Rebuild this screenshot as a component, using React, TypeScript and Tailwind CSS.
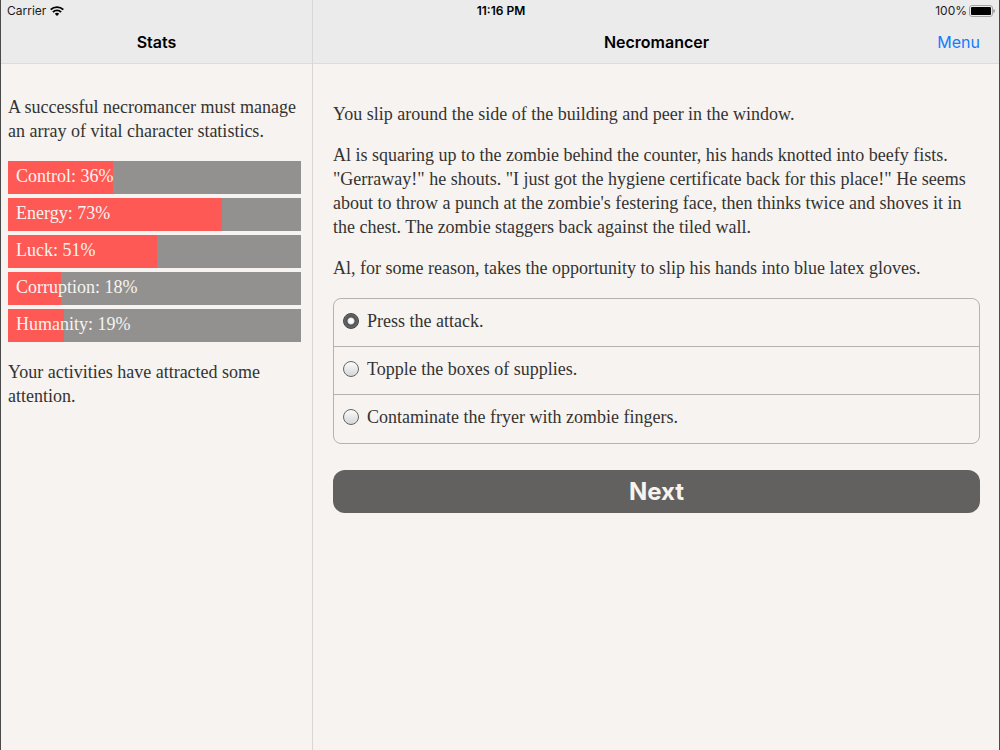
import React, { useState } from 'react';
import clsx from 'clsx';

interface Stat {
  label: string;
  value: number;
}

const stats: Stat[] = [
  { label: 'Control', value: 36 },
  { label: 'Energy', value: 73 },
  { label: 'Luck', value: 51 },
  { label: 'Corruption', value: 18 },
  { label: 'Humanity', value: 19 },
];

const choices = [
  'Press the attack.',
  'Topple the boxes of supplies.',
  'Contaminate the fryer with zombie fingers.',
];

const WifiIcon: React.FC = () => (
  <svg viewBox="0 0 14 10" className="h-[10px] w-[14px]" aria-hidden="true">
    <g fill="none" stroke="#000" strokeWidth="1.9">
      <path d="M0.7 3.7a8.9 8.9 0 0 1 12.6 0" />
      <path d="M2.9 6.1a5.8 5.8 0 0 1 8.2 0" />
    </g>
    <path d="M7 10 4.8 7.8a3.1 3.1 0 0 1 4.4 0Z" />
  </svg>
);

const BatteryIcon: React.FC = () => (
  <svg viewBox="0 0 26 12" className="h-[12px] w-[26px]" aria-hidden="true">
    <rect x="0.5" y="0.5" width="23" height="11" rx="2.5" fill="none" stroke="#a3a3a5" />
    <rect x="2" y="2" width="20" height="8" rx="1" />
    <path d="M24.4 4v4c2-.5 2-3.5 0-4Z" fill="#8f8f91" />
  </svg>
);

const StatusBar: React.FC = () => (
  <div className="absolute inset-x-0 top-0 grid h-[21px] grid-cols-3 items-center pl-1.5 pr-1 text-xs text-[#1c1c1c]">
    <div className="flex items-center gap-1">
      <span>Carrier</span>
      <WifiIcon />
    </div>
    <span className="text-center font-semibold text-black">11:16 PM</span>
    <div className="flex items-center justify-end gap-0.5">
      <span>100%</span>
      <BatteryIcon />
    </div>
  </div>
);

const StatBar: React.FC<Stat> = ({ label, value }) => (
  <div className="relative h-[33px] bg-[#92918f] px-2 leading-[31px] text-[#f7f3f0]">
    <div className="absolute inset-y-0 left-0 bg-[#ff5955]" style={{ width: `${value}%` }} />
    <span className="relative">
      {label}: {value}%
    </span>
  </div>
);

export default function App() {
  const [selected, setSelected] = useState(0);

  return (
    <div className="relative flex min-h-screen border-x border-[#4a4a4a] bg-[#f7f3f0] font-['Inter',sans-serif] text-[#333]">
      {/* Stats sidebar */}
      <aside className="w-[312px] shrink-0 border-r border-[#d9d7d5]">
        <header className="flex h-16 items-end justify-center border-b border-[#dcdcdc] bg-[#ebebec] pb-[9px]">
          <h2 className="text-base leading-6 font-semibold text-black">Stats</h2>
        </header>
        <div className="pl-[7px] pr-[11px] pt-[31px] font-['Liberation_Serif',serif] text-lg leading-6">
          <p>A successful necromancer must manage an array of vital character statistics.</p>
          <div className="my-[18px] flex flex-col gap-1">
            {stats.map((stat) => (
              <StatBar key={stat.label} {...stat} />
            ))}
          </div>
          <p>Your activities have attracted some attention.</p>
        </div>
      </aside>

      {/* Story */}
      <main className="min-w-0 flex-1">
        <header className="grid h-16 grid-cols-[1fr_auto_1fr] items-end border-b border-[#dcdcdc] bg-[#ebebec] pl-5 pr-[19px] pb-[9px]">
          <h1 className="col-start-2 text-base leading-6 font-semibold text-black">Necromancer</h1>
          <button className="justify-self-end text-base leading-6 text-[#137cff]">Menu</button>
        </header>
        <div className="pl-5 pr-[19px] pt-[38px] font-['Liberation_Serif',serif] text-lg leading-6">
          <div className="flex flex-col gap-[17px]">
            <p>You slip around the side of the building and peer in the window.</p>
            <p>
              Al is squaring up to the zombie behind the counter, his hands knotted into beefy fists.
              "Gerraway!" he shouts. "I just got the hygiene certificate back for this place!" He seems
              about to throw a punch at the zombie's festering face, then thinks twice and shoves it in
              the chest. The zombie staggers back against the tiled wall.
            </p>
            <p>Al, for some reason, takes the opportunity to slip his hands into blue latex gloves.</p>
          </div>

          <form onSubmit={(e) => e.preventDefault()}>
            <div className="mt-[18px] divide-y divide-[#b3b3b3] rounded-lg border border-[#b3b3b3]">
              {choices.map((choice, i) => (
                <label key={choice} className="flex h-12 items-center gap-2 px-[9px] pb-1">
                  <input
                    type="radio"
                    name="choice"
                    checked={selected === i}
                    onChange={() => setSelected(i)}
                    className={clsx(
                      'size-4 shrink-0 appearance-none rounded-full border',
                      selected === i
                        ? 'border-[#444] bg-[radial-gradient(circle,#fff_0_2px,#ddd_3px,#505050_4px,#737373_8px)]'
                        : 'border-[#666] bg-linear-to-b from-[#fbfbfb] to-[#d6d6d6]'
                    )}
                  />
                  <span>{choice}</span>
                </label>
              ))}
            </div>
            <button
              type="submit"
              className="mt-[26px] h-[43px] w-full rounded-xl bg-[#62615f] font-['Inter',sans-serif] text-2xl font-bold text-[#f7f3f0]"
            >
              Next
            </button>
          </form>
        </div>
      </main>

      <StatusBar />
    </div>
  );
}
